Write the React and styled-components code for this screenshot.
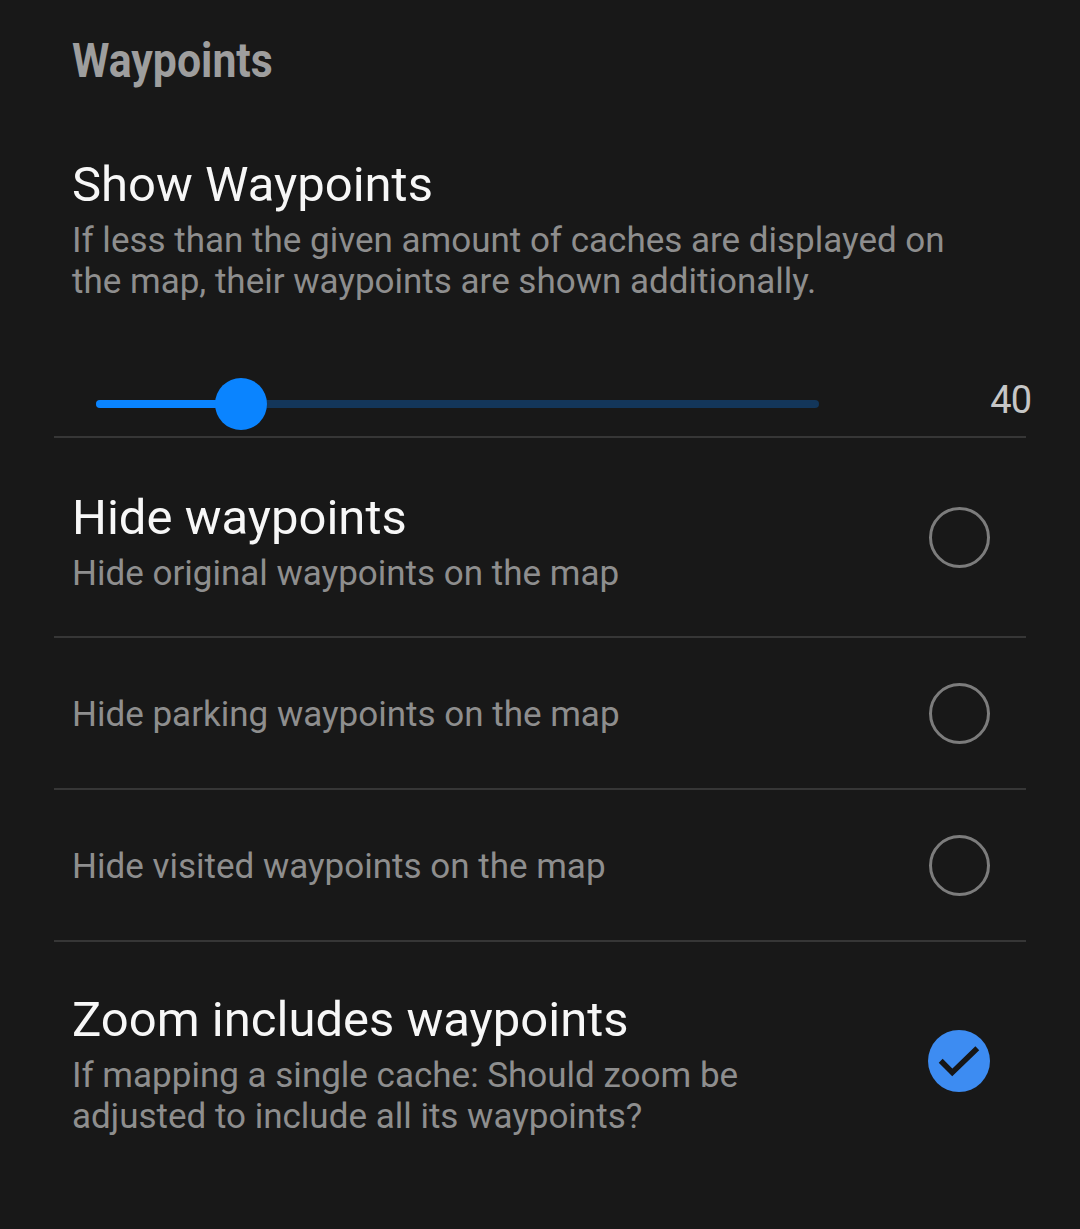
import React from "react";
import styled, { createGlobalStyle } from "styled-components";

const Global = createGlobalStyle`
  html, body { margin: 0; padding: 0; background: #181818; }
  body { font-family: Roboto, "Noto Sans", sans-serif; -webkit-font-smoothing: antialiased; }
`;

const Page = styled.div`
  min-height: 1229px;
  background: #181818;
  padding-top: 33px;
  box-sizing: border-box;
`;

const Category = styled.h2`
  margin: 0 0 0 72px;
  font-size: 49px;
  line-height: 56px;
  font-weight: 700;
  color: #9e9e9e;
  transform: scaleX(0.873);
  transform-origin: left center;
`;

const List = styled.div`
  margin: 0 54px;
`;

const Row = styled.div`
  display: flex;
  align-items: stretch;
  border-bottom: ${(p) => (p.$last ? "none" : "2px solid #363636")};
  min-height: ${(p) => p.$minH || 0}px;
`;

const TextBlock = styled.div`
  flex: 1;
  padding: ${(p) => p.$pad};
  display: flex;
  flex-direction: column;
  justify-content: ${(p) => (p.$top ? "flex-start" : "center")};
`;

const Title = styled.div`
  font-size: 49px;
  line-height: 56px;
  color: #f7f7f7;
`;

const Summary = styled.div`
  font-size: 35px;
  line-height: 41px;
  color: #8e8e8e;
  margin-top: ${(p) => (p.$first ? 0 : 7)}px;
`;

const Widget = styled.div`
  width: 146px;
  display: flex;
  align-items: center;
  justify-content: flex-end;
  padding-right: 36px;
  box-sizing: border-box;
`;

const Radio = styled.div`
  width: 61px;
  height: 61px;
  border-radius: 50%;
  border: 3px solid #7c7c7c;
  box-sizing: border-box;
`;

const SliderRow = styled.div`
  display: flex;
  align-items: center;
  height: 60px;
  margin: 72px -55px 2px -18px;
  padding-left: 42px;
`;

const Track = styled.div`
  position: relative;
  width: 723px;
  height: 8px;
  border-radius: 4px;
  background: #13365a;
`;

const Fill = styled.div`
  height: 100%;
  border-radius: 4px;
  background: #0a84ff;
`;

const Thumb = styled.div`
  position: absolute;
  top: 50%;
  width: 52px;
  height: 52px;
  margin-left: -26px;
  margin-top: -26px;
  border-radius: 50%;
  background: #0a84ff;
`;

const Value = styled.div`
  flex: 1;
  text-align: right;
  font-size: 38px;
  line-height: 52px;
  padding-bottom: 8px;
  color: #c6c6c6;
  letter-spacing: -1px;
`;

function Check() {
  return (
    <svg width="62" height="62" viewBox="0 0 62 62">
      <circle cx="31" cy="31" r="31" fill="#3d8cf2" />
      <path d="M12.7 30.7 L24.3 42.5 L49.3 18.3" fill="none" stroke="#161616" strokeWidth="5.5" />
    </svg>
  );
}

export default function App() {
  const pct = (241 - 96) / 723;
  return (
    <Page>
      <Global />
      <Category>Waypoints</Category>
      <List>
        <Row>
          <TextBlock $top $pad="68px 50px 0 18px">
            <Title>Show Waypoints</Title>
            <Summary>
              If less than the given amount of caches are displayed on the map, their waypoints are shown additionally.
            </Summary>
            <SliderRow>
              <Track>
                <Fill style={{ width: `${pct * 100}%` }} />
                <Thumb style={{ left: `${pct * 100}%` }} />
              </Track>
              <Value>40</Value>
            </SliderRow>
          </TextBlock>
        </Row>
        <Row>
          <TextBlock $pad="52px 0 42px 18px">
            <Title>Hide waypoints</Title>
            <Summary>Hide original waypoints on the map</Summary>
          </TextBlock>
          <Widget>
            <Radio />
          </Widget>
        </Row>
        <Row $minH={150}>
          <TextBlock $pad="2px 0 0 18px">
            <Summary $first>Hide parking waypoints on the map</Summary>
          </TextBlock>
          <Widget>
            <Radio />
          </Widget>
        </Row>
        <Row $minH={150}>
          <TextBlock $pad="2px 0 0 18px">
            <Summary $first>Hide visited waypoints on the map</Summary>
          </TextBlock>
          <Widget>
            <Radio />
          </Widget>
        </Row>
        <Row $last>
          <TextBlock $pad="50px 0 43px 18px">
            <Title>Zoom includes waypoints</Title>
            <Summary>
              If mapping a single cache: Should zoom be adjusted to include all its waypoints?
            </Summary>
          </TextBlock>
          <Widget>
            <Check />
          </Widget>
        </Row>
      </List>
    </Page>
  );
}
